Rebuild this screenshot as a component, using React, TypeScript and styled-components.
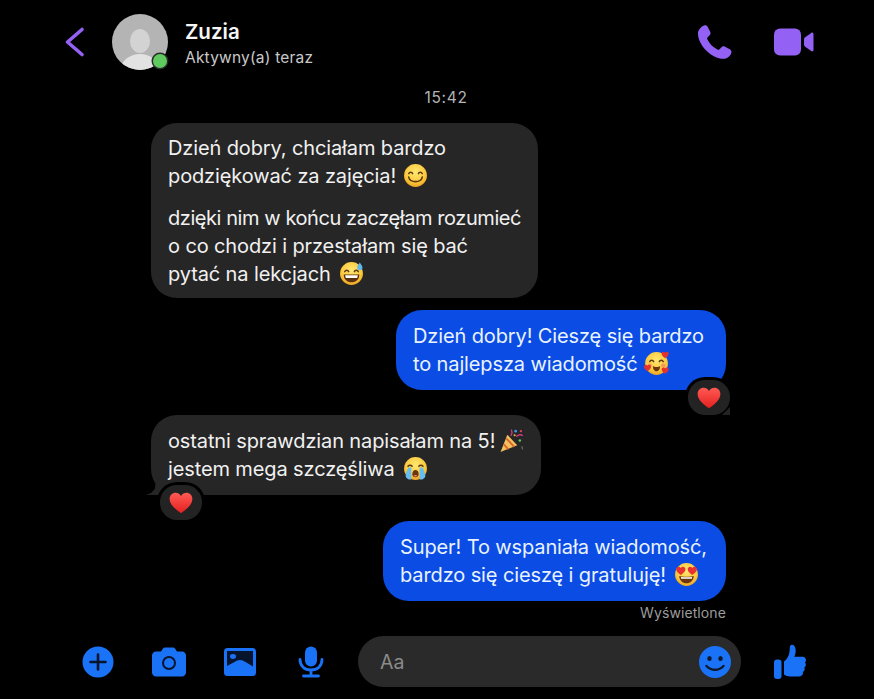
import styled, { createGlobalStyle } from 'styled-components';

const GlobalStyle = createGlobalStyle`
  html, body {
    margin: 0;
    padding: 0;
    background: #000;
  }
`;

const Page = styled.div`
  width: 874px;
  height: 699px;
  display: flex;
  flex-direction: column;
  overflow: hidden;
  background: #000;
  font-family: Inter, 'Liberation Sans', sans-serif;
  color: #f1f1f1;
`;

const Header = styled.header`
  display: flex;
  align-items: center;
  height: 56px;
  padding: 14px 60px 0 64px;
`;

const BackIcon = styled.svg`
  width: 22px;
  height: 34px;
  margin-right: 26px;
`;

const AvatarWrap = styled.div`
  position: relative;
  width: 56px;
  height: 56px;
  margin-right: 17px;
`;

const AvatarDot = styled.span`
  position: absolute;
  right: 1px;
  bottom: 2px;
  width: 14px;
  height: 14px;
  border-radius: 50%;
  background: #5fcb5f;
  box-shadow: 0 0 0 1.5px #2a2a2a;
`;

const Who = styled.div`
  display: flex;
  flex: 1;
  flex-direction: column;
  gap: 4px;
  margin-top: 2px;
`;

const Name = styled.div`
  font-size: 20.5px;
  line-height: 26px;
  font-weight: 600;
  color: #f6f6f6;
`;

const Status = styled.div`
  font-size: 15.5px;
  line-height: 18px;
  letter-spacing: 0.2px;
  color: #c9c9c9;
`;

const CallActions = styled.div`
  display: flex;
  align-items: center;
  gap: 41px;
`;

const TimeStamp = styled.div`
  margin-top: 18px;
  padding-left: 18px;
  text-align: center;
  font-size: 15.5px;
  line-height: 20px;
  letter-spacing: 0.7px;
  color: #b4b4b4;
`;

const Thread = styled.main`
  display: flex;
  flex-direction: column;
  padding: 15px 148px 0 151px;
`;

const Bubble = styled.div<{ $mine?: boolean; $top: number; $right: number; $long?: boolean }>`
  position: relative;
  align-self: ${({ $mine }) => ($mine ? 'flex-end' : 'flex-start')};
  margin-top: ${({ $top }) => $top}px;
  padding: ${({ $long, $right }) =>
    $long ? `11px ${$right}px 10px 17px` : `12px ${$right}px 12px 17px`};
  border-radius: 26px;
  background: ${({ $mine }) => ($mine ? '#0a4ce4' : '#262626')};
  color: ${({ $mine }) => ($mine ? '#e9f3ff' : '#f1f1f1')};
  font-size: 20px;
  line-height: 28px;
  letter-spacing: -0.12px;
  white-space: nowrap;
`;

const Paragraph = styled.p`
  margin: 0;

  & + & {
    margin-top: 14px;
  }
`;

const Line = styled.div<{ $tight?: boolean }>`
  height: 28px;
  letter-spacing: ${({ $tight }) => ($tight ? '-0.43px' : 'inherit')};
`;

const Tail = styled.span`
  position: absolute;
  left: -5px;
  bottom: 0;
  width: 26px;
  height: 14px;
  background: #262626;
  clip-path: polygon(100% 0, 100% 100%, 0 100%, 20% 85%, 34% 55%, 38% 0);
`;

const Reaction = styled.div<{ $mine?: boolean }>`
  position: absolute;
  display: flex;
  align-items: center;
  justify-content: center;
  width: 42px;
  height: 35px;
  border-radius: 17px;
  background: #232323;
  box-shadow: 0 0 0 3px #000;
  ${({ $mine }) =>
    $mine
      ? 'right: -4px; bottom: -25px;'
      : 'left: 9px; bottom: -25px;'}
`;

const ReactionTail = styled.span`
  position: absolute;
  right: 0;
  bottom: 0;
  width: 8px;
  height: 8px;
  background: #232323;
  clip-path: polygon(100% 100%, 0 100%, 100% 0);
`;

const Seen = styled.div`
  align-self: flex-end;
  margin-top: 3px;
  font-size: 14px;
  line-height: 18px;
  letter-spacing: 0.1px;
  color: #9c9c9c;
`;

const Footer = styled.footer`
  display: flex;
  align-items: center;
  margin-top: auto;
  padding: 0 0 12px 81px;
`;

const Tools = styled.div`
  display: flex;
  gap: 37px;
  margin-right: 30px;
`;

const ToolSlot = styled.div`
  display: flex;
  align-items: center;
  justify-content: center;
  width: 34px;
  height: 34px;
`;

const Composer = styled.div`
  display: flex;
  align-items: center;
  justify-content: space-between;
  width: 383px;
  height: 51px;
  padding: 0 10px 0 22px;
  box-sizing: border-box;
  border-radius: 26px;
  background: #2a2a2a;
`;

const Placeholder = styled.span`
  font-size: 19.5px;
  color: #8b8b8b;
`;

const LikeSlot = styled.div`
  display: flex;
  margin-left: 33px;
`;

const InlineEmoji = styled.svg<{ $gap: number }>`
  display: inline-block;
  width: 25px;
  height: 25px;
  margin-left: ${({ $gap }) => $gap}px;
  vertical-align: -5px;
`;

const ReactionHeart = styled.svg`
  width: 26px;
  height: 26px;
  margin-top: 1px;
`;

const purple = '#9461f5';
const blue = '#1a72f6';

type EmojiKind = 'smile' | 'sweat' | 'hearts' | 'party' | 'cry' | 'heartEyes';

const heartPath = 'M12 21.5C5 16.4 1.5 12.6 1.5 8.2 1.5 4.8 4 2.5 7 2.5c2 0 3.8 1 5 3 1.2-2 3-3 5-3 3 0 5.5 2.3 5.5 5.7 0 4.4-3.5 8.2-10.5 13.3Z';

const FaceBase = ({ id }: { id: string }) => (
  <>
    <defs>
      <radialGradient id={id} cx="50%" cy="35%" r="70%">
        <stop offset="0%" stopColor="#ffe873" />
        <stop offset="65%" stopColor="#fcc83a" />
        <stop offset="100%" stopColor="#e99a1c" />
      </radialGradient>
    </defs>
    <circle cx="12" cy="12" r="11" fill={`url(#${id})`} />
  </>
);

const HappyEyes = () => (
  <path d="M5.5 10.2c.8-1.8 3-1.8 3.8 0M14.7 10.2c.8-1.8 3-1.8 3.8 0" fill="none" stroke="#5b3a10" strokeWidth="1.4" strokeLinecap="round" />
);

const Emoji = ({ kind, gap }: { kind: EmojiKind; gap: number }) => (
  <InlineEmoji viewBox="0 0 24 24" $gap={gap}>
    {kind === 'smile' && (
      <>
        <FaceBase id="face-smile" />
        <HappyEyes />
        <path d="M5.5 13.5c1.2 5.8 11.8 5.8 13 0" fill="none" stroke="#5b3a10" strokeWidth="1.5" strokeLinecap="round" />
      </>
    )}
    {kind === 'sweat' && (
      <>
        <FaceBase id="face-sweat" />
        <HappyEyes />
        <path d="M4.5 13h15c0 5-3.4 7.5-7.5 7.5S4.500 18 4.500 13Z" fill="#5b3010" />
        <path d="M6 13.600h12c0 1.200-.2 2-.6 2.600H6.600c-.4-.6-.6-1.400-.6-2.600Z" fill="#fff" />
        <path d="M20 1.500c1.300 2 2.500 3.300 2.500 4.800a2.500 2.500 0 0 1-5 0c0-1.500 1.200-2.800 2.500-4.800Z" fill="#5cb8ee" />
      </>
    )}
    {kind === 'hearts' && (
      <>
        <FaceBase id="face-hearts" />
        <HappyEyes />
        <path d="M8.500 14.500c1.500 1.300 5.500 1.300 7 0-.2 3.800-1.700 5-3.500 5s-3.300-1.200-3.500-5Z" fill="#6b3512" />
        <circle cx="5.500" cy="14" r="2" fill="#f48a63" opacity="0.8" />
        <circle cx="18.500" cy="14" r="2" fill="#f48a63" opacity="0.8" />
        <path d={heartPath} fill="#e5322f" transform="translate(16.500 0) scale(.32)" />
        <path d={heartPath} fill="#e5322f" transform="translate(-.5 12.500) scale(.32)" />
        <path d={heartPath} fill="#e5322f" transform="translate(16.500 15) scale(.32)" />
      </>
    )}
    {kind === 'party' && (
      <>
        <path d="M1.500 23 8 6.500l9.500 10Z" fill="#f2c25e" />
        <path d="M4.500 15.500l4.500 5M7 10l7.500 8" stroke="#d9682f" strokeWidth="1.800" />
        <path d="M12 2c1 2 .5 3.500-.5 5M17 8c2-2 3.500-2 5.500-1" fill="none" stroke="#d63a86" strokeWidth="1.300" strokeLinecap="round" />
        <circle cx="16" cy="3" r="1.300" fill="#3f9be0" />
        <circle cx="21" cy="3" r="1.100" fill="#e5405e" />
        <circle cx="20" cy="12" r="1.200" fill="#5ec46a" />
        <circle cx="15" cy="7" r="1" fill="#f0c13a" />
        <path d="M22 17.500l.5 3" stroke="#7a7a7a" strokeWidth="1" />
      </>
    )}
    {kind === 'cry' && (
      <>
        <FaceBase id="face-cry" />
        <path d="M4.800 9.800c1-1.200 3-1.200 4 0M15.200 9.800c1-1.200 3-1.200 4 0" fill="none" stroke="#5b3a10" strokeWidth="1.400" strokeLinecap="round" />
        <path d="M9 17.500c0-2.600 1.300-4 3-4s3 1.400 3 4c0 1.800-1.300 2.800-3 2.800s-3-1-3-2.800Z" fill="#6b3512" />
        <path d="M10.200 19c.4-1 3.200-1 3.600 0-.5.900-3.100.9-3.600 0Z" fill="#f0806a" />
        <path d="M5 11h3v11.500H5.500c-1.500-.6-3-1.700-3-3.500.3-2.600 1.500-5 2.500-8ZM16 11h3c1 3 2.200 5.400 2.500 8 0 1.800-1.500 2.900-3 3.500H16Z" fill="#66bdf0" />
      </>
    )}
    {kind === 'heartEyes' && (
      <>
        <FaceBase id="face-heart-eyes" />
        <path d="M5 13.500c1.800.9 12.200.9 14 0-.2 4.300-3.200 7-7 7s-6.800-2.700-7-7Z" fill="#6b3512" />
        <path d="M6.500 14.300c3 .5 8 .5 11 0l-.4 1.700H6.900Z" fill="#fff" />
        <path d={heartPath} fill="#e8322f" transform="translate(1.500 3.500) scale(.42)" />
        <path d={heartPath} fill="#e8322f" transform="translate(12.500 3.500) scale(.42)" />
      </>
    )}
  </InlineEmoji>
);

const Heart = () => (
  <ReactionHeart viewBox="0 0 24 24">
    <defs>
      <linearGradient id="heart-red" x1="0" y1="0" x2="0" y2="1">
        <stop offset="0%" stopColor="#ff5a55" />
        <stop offset="100%" stopColor="#e3201f" />
      </linearGradient>
    </defs>
    <path d={heartPath} fill="url(#heart-red)" />
  </ReactionHeart>
);

const Avatar = () => (
  <svg width="56" height="56" viewBox="0 0 56 56">
    <defs>
      <clipPath id="avatar-clip">
        <circle cx="28" cy="28" r="28" />
      </clipPath>
    </defs>
    <g clipPath="url(#avatar-clip)">
      <rect width="56" height="56" fill="#b4b4b4" />
      <ellipse cx="28" cy="27" rx="10" ry="12" fill="#d3d3d3" />
      <ellipse cx="28" cy="55" rx="19" ry="15" fill="#e2e2e2" />
    </g>
  </svg>
);

const PhoneIcon = () => (
  <svg width="36" height="36" viewBox="0 0 36 36">
    <path
      fill={purple}
      d="M7 1.500C8.500.8 10 1.500 10.800 3l2.400 4.800c.7 1.400.3 2.800-.8 3.800l-1.800 1.600c-.6.600-.7 1.300-.3 2.100 2 4.200 5.700 8.100 10.100 10.300.8.400 1.500.3 2.100-.4l1.700-1.800c1-1.100 2.500-1.400 3.800-.7l4.800 2.600c1.400.8 2.100 2.300 1.400 3.900-1.200 3.100-4.500 5.600-7.800 5.600C14.600 34.800 1 21 1 9.400 1 6.200 3.800 2.800 7 1.500Z"
    />
  </svg>
);

const VideoIcon = () => (
  <svg width="40" height="28" viewBox="0 0 40 28">
    <rect x="0" y="0.500" width="27" height="27" rx="6" fill={purple} />
    <path fill={purple} d="M30 11.500c0-1 .4-1.700 1.200-2.300l6-4.300c1.100-.7 2.300 0 2.300 1.200v15.800c0 1.200-1.200 1.900-2.300 1.200l-6-4.300c-.8-.6-1.200-1.300-1.200-2.300Z" />
  </svg>
);

const PlusIcon = () => (
  <svg width="32" height="32" viewBox="0 0 32 32">
    <circle cx="16" cy="16" r="15.500" fill={blue} />
    <path d="M16 8.500v15M8.500 16h15" stroke="#06142e" strokeWidth="2.600" strokeLinecap="round" />
  </svg>
);

const CameraIcon = () => (
  <svg width="34" height="30" viewBox="0 0 34 30">
    <path
      fill={blue}
      d="M4 4.500h5l2-3c.4-.7 1-1 1.800-1h8.400c.8 0 1.400.3 1.800 1l2 3h5c2.200 0 4 1.800 4 4V25.500c0 2.200-1.800 4-4 4H4c-2.200 0-4-1.800-4-4V8.500c0-2.200 1.800-4 4-4Z"
    />
    <circle cx="17" cy="16" r="7" fill="#06142e" />
    <circle cx="17" cy="16" r="5" fill={blue} />
  </svg>
);

const ImageIcon = () => (
  <svg width="32" height="28" viewBox="0 0 32 28">
    <rect x="0" y="0" width="32" height="28" rx="3.500" fill={blue} />
    <path fill="#06142e" d="M3 3h26v15.500l-7.500-4.500c-2-1.200-3.500-2-5.500-2s-3.500.8-5 1.700L3 18Z" />
    <ellipse cx="9" cy="8.500" rx="3" ry="2.400" fill={blue} />
  </svg>
);

const MicIcon = () => (
  <svg width="26" height="32" viewBox="0 0 26 32">
    <rect x="7" y="0.500" width="12" height="20" rx="6" fill={blue} />
    <path d="M2 13.500c0 6.500 4.500 10.500 11 10.500s11-4 11-10.500M13 24v5" fill="none" stroke={blue} strokeWidth="2.800" strokeLinecap="round" />
    <path d="M5.500 30h15" stroke={blue} strokeWidth="2.800" strokeLinecap="round" />
  </svg>
);

const SmileIcon = () => (
  <svg width="32" height="32" viewBox="0 0 32 32">
    <circle cx="16" cy="16" r="16" fill={blue} />
    <ellipse cx="10.500" cy="12.500" rx="2.200" ry="2.600" fill="#10182b" />
    <ellipse cx="21.500" cy="12.500" rx="2.200" ry="2.600" fill="#10182b" />
    <path d="M7.500 20c4.500 5 12.500 5 17 0" fill="none" stroke="#10182b" strokeWidth="2.400" strokeLinecap="round" />
  </svg>
);

const LikeIcon = () => (
  <svg width="32" height="36" viewBox="0 0 32 36">
    <rect x="0" y="15.500" width="7.500" height="19.500" rx="3" fill={blue} />
    <path
      fill={blue}
      d="M10 17.500c3-2 5-6 5.500-9.500.2-2 .3-4 .5-5.500C16.300.5 18.500 0 20 1.500c1.500 1.600 2 4.500 1.500 7.500-.2 1.300-.7 2.700-1.200 3.800h8c2.300 0 3.700 1.400 3.700 3.200 0 1-.4 1.900-1 2.500.6.700 1 1.600.8 2.700-.1 1-.7 1.800-1.500 2.300.4.700.5 1.500.3 2.300-.2 1-.9 1.800-1.700 2.200.2.700.2 1.400-.1 2.100-.5 1.500-2 2.400-3.800 2.400H16c-2.400 0-4.400-.8-6-2Z"
    />
  </svg>
);

export default function App() {
  return (
    <Page>
      <GlobalStyle />
      <Header>
        <BackIcon viewBox="0 0 22 34">
          <path d="M18 4.500 3.500 17 18 29.500" fill="none" stroke={purple} strokeWidth="3.600" strokeLinecap="round" strokeLinejoin="round" />
        </BackIcon>
        <AvatarWrap>
          <Avatar />
          <AvatarDot />
        </AvatarWrap>
        <Who>
          <Name>Zuzia</Name>
          <Status>Aktywny(a) teraz</Status>
        </Who>
        <CallActions>
          <PhoneIcon />
          <VideoIcon />
        </CallActions>
      </Header>

      <TimeStamp>15:42</TimeStamp>

      <Thread>
        <Bubble $top={0} $right={17} $long>
          <Paragraph>
            <Line>Dzień dobry, chciałam bardzo</Line>
            <Line>
              podziękować za zajęcia! <Emoji kind="smile" gap={1} />
            </Line>
          </Paragraph>
          <Paragraph>
            <Line $tight>dzięki nim w końcu zaczęłam rozumieć</Line>
            <Line>o co chodzi i przestałam się bać</Line>
            <Line>
              pytać na lekcjach <Emoji kind="sweat" gap={3} />
            </Line>
          </Paragraph>
        </Bubble>

        <Bubble $mine $top={12} $right={22}>
          <Line>Dzień dobry! Cieszę się bardzo</Line>
          <Line>
            to najlepsza wiadomość <Emoji kind="hearts" gap={1} />
          </Line>
          <Reaction $mine>
            <Heart />
            <ReactionTail />
          </Reaction>
        </Bubble>

        <Bubble $top={25} $right={17}>
          <Tail />
          <Line>
            ostatni sprawdzian napisałam na 5!
            <Emoji kind="party" gap={4} />
          </Line>
          <Line>
            jestem mega szczęśliwa <Emoji kind="cry" gap={3} />
          </Line>
          <Reaction>
            <Heart />
          </Reaction>
        </Bubble>

        <Bubble $mine $top={26} $right={19}>
          <Line>Super! To wspaniała wiadomość,</Line>
          <Line>
            bardzo się cieszę i gratuluję! <Emoji kind="heartEyes" gap={3} />
          </Line>
        </Bubble>

        <Seen>Wyświetlone</Seen>
      </Thread>

      <Footer>
        <Tools>
          <ToolSlot>
            <PlusIcon />
          </ToolSlot>
          <ToolSlot>
            <CameraIcon />
          </ToolSlot>
          <ToolSlot>
            <ImageIcon />
          </ToolSlot>
          <ToolSlot>
            <MicIcon />
          </ToolSlot>
        </Tools>
        <Composer>
          <Placeholder>Aa</Placeholder>
          <SmileIcon />
        </Composer>
        <LikeSlot>
          <LikeIcon />
        </LikeSlot>
      </Footer>
    </Page>
  );
}
